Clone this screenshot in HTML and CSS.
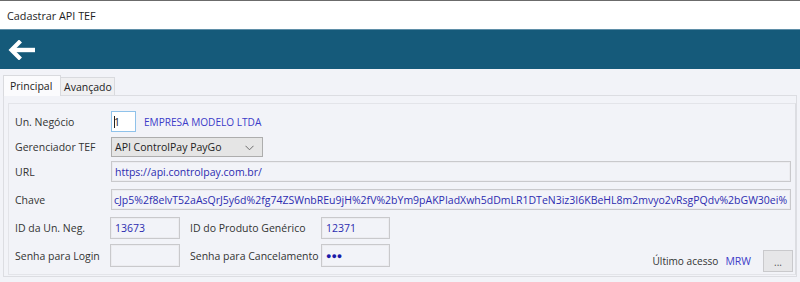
FILE: index.html
```html
<!DOCTYPE html>
<html lang="pt-BR">
<head>
<meta charset="utf-8">
<title>Cadastrar API TEF</title>
<link rel="stylesheet" href="styles.css">
</head>
<body>
<div class="window">
  <div class="titlebar">Cadastrar API TEF</div>
  <div class="toolbar">
    <svg class="back" width="28" height="20" viewBox="0 0 28 20">
      <polyline points="11,2.5 3.5,10 11,17.5" fill="none" stroke="#fff" stroke-width="4.2" stroke-linejoin="miter" stroke-linecap="square"/>
      <line x1="4" y1="10" x2="27" y2="10" stroke="#fff" stroke-width="4.4"/>
    </svg>
  </div>
  <div class="content">
    <div class="tabs">
      <div class="tab active">Principal</div>
      <div class="tab">Avançado</div>
    </div>
    <div class="page">
      <div class="panel">
        <div class="row r1">
          <span class="label">Un. Negócio</span>
          <span class="input focus short"><span class="caret"></span>1</span>
          <span class="value company">EMPRESA MODELO LTDA</span>
        </div>
        <div class="row r2">
          <span class="label">Gerenciador TEF</span>
          <span class="combo">API ControlPay PayGo
            <svg class="chev" width="9" height="6" viewBox="0 0 9 6"><polyline points="0.5,0.8 4.5,4.8 8.5,0.8" fill="none" stroke="#6d6d6d" stroke-width="1"/></svg>
          </span>
        </div>
        <div class="row r3">
          <span class="label">URL</span>
          <span class="input wide">https://api.controlpay.com.br/</span>
        </div>
        <div class="row r4">
          <span class="label">Chave</span>
          <span class="input wide key">cJp5%2f8elvT52aAsQrJ5y6d%2fg74ZSWnbREu9jH%2fV%2bYm9pAKPIadXwh5dDmLR1DTeN3iz3I6KBeHL8m2mvyo2vRsgPQdv%2bGW30ei%</span>
        </div>
        <div class="row r5">
          <span class="label">ID da Un. Neg.</span>
          <span class="input box">13673</span>
          <span class="label label2">ID do Produto Genérico</span>
          <span class="input box">12371</span>
        </div>
        <div class="row r6">
          <span class="label">Senha para Login</span>
          <span class="input box"></span>
          <span class="label label2">Senha para Cancelamento</span>
          <span class="input box dots">●●●</span>
          <span class="last-label">Último acesso</span>
          <span class="value mrw">MRW</span>
          <span class="btn">...</span>
        </div>
      </div>
    </div>
  </div>
</div>
</body>
</html>
```
FILE: styles.css
```css
* { box-sizing: border-box; }
html, body { margin: 0; padding: 0; }
body {
  width: 800px;
  height: 282px;
  overflow: hidden;
  font-family: "Open Sans", "Noto Sans", sans-serif;
  font-size: 10.5px;
  color: #333;
  background: #f2f3f8;
}
.window { display: flex; flex-direction: column; height: 282px; }
.titlebar {
  height: 29px;
  border-top: 1px solid #6b6b6b;
  background: #fff;
  padding-left: 7px;
  display: flex;
  align-items: center;
  font-size: 10.8px;
  color: #1e1e1e;
}
.toolbar {
  height: 40px;
  background: #155a7a;
  border-top: 1px solid #5f8fa8;
  display: flex;
  align-items: center;
  padding-left: 8px;
}
.back { display: block; margin-top: 1px; }
.content { flex: 1; padding: 6px 3px 0 3px; display: flex; flex-direction: column; }
.tabs { display: flex; align-items: flex-end; height: 20px; }
.tab {
  height: 18px;
  border: 1px solid #d9dade;
  border-bottom: none;
  background: #f0f0f2;
  display: flex;
  align-items: center;
  color: #222;
  white-space: nowrap;
}
.tab.active {
  width: 58px;
  padding-left: 6px;
  background: #fbfbfd;
  position: relative;
  z-index: 1;
  margin-bottom: -1px;
  height: 21px;
}
.tab:not(.active) { width: 54px; border-left: none; padding-left: 3px; }
.page {
  height: 182px;
  width: 794px;
  border: 1px solid #dcdde2;
  background: #f2f3f8;
  padding: 7px 0 0 4px;
}
.panel {
  height: 172px;
  border: 1px solid #e3e4e9;
  border-right-color: #dcdde2;
  padding: 0 2px 0 6px;
  display: flex;
  flex-direction: column;
}
.row { display: flex; align-items: center; }
.r1 { margin-top: 7px; height: 21px; }
.r2 { margin-top: 5px; height: 20px; }
.r3 { margin-top: 4px; height: 21px; }
.r4 { margin-top: 7px; height: 21px; }
.r5 { margin-top: 7px; height: 22px; }
.r6 { margin-top: 5px; height: 23px; align-items: flex-start; }
.r6 .label, .r6 .label2 { align-self: center; }
.label { width: 95px; flex: none; color: #333; white-space: nowrap; }
.label2 { width: 131px; margin-left: 10px; }
.input {
  height: 100%;
  border: 1px solid #c9c9cc;
  box-shadow: inset 0 0 0 1px #ececf0;
  background: #f2f3f8;
  display: flex;
  align-items: center;
  padding-left: 3px;
  color: #2c2cb0;
  white-space: nowrap;
  overflow: hidden;
  flex: none;
}
.r1 .input, .r2 .combo, .r3 .input, .r4 .input { margin-left: 1px; }
.input.short { width: 25px; }
.input.focus {
  background: #fff;
  border-color: #8fc2ea;
  box-shadow: none;
  color: #222;
  padding-left: 2px;
}
.caret { width: 1px; height: 12px; background: #222; margin-right: -1px; }
.input.wide { width: 680px; }
.input.key { font-size: 10.5px; padding-left: 2px; }
.input.box { width: 70px; padding-left: 4px; }
.r5 .input.box:last-child { width: 69px; }
.r6 .input.box:nth-child(4) { width: 69px; }
.dots { font-size: 9px; color: #1a1aa8; padding-left: 3px; }
.value { color: #3c3cc8; white-space: nowrap; flex: none; }
.company { margin-left: 8px; font-size: 10.1px; }
.combo {
  width: 152px;
  height: 100%;
  border: 1px solid #adadad;
  background: #e5e5e5;
  display: flex;
  align-items: center;
  padding-left: 3px;
  color: #222;
  position: relative;
  flex: none;
}
.chev { position: absolute; right: 8px; top: 7px; }
.last-label { margin-left: auto; align-self: center; margin-top: 11px; color: #333; white-space: nowrap; flex: none; font-size: 10.1px; }
.mrw { margin-left: 7px; align-self: center; margin-top: 11px; }
.btn {
  margin-left: 12px;
  margin-top: 6px;
  width: 30px;
  height: 22px;
  border: 1px solid #c9c9cc;
  background: #e6e6e8;
  display: flex;
  align-items: flex-end;
  justify-content: center;
  padding-bottom: 4px;
  color: #555;
  font-size: 10px;
  line-height: 1;
  flex: none;
}
```
